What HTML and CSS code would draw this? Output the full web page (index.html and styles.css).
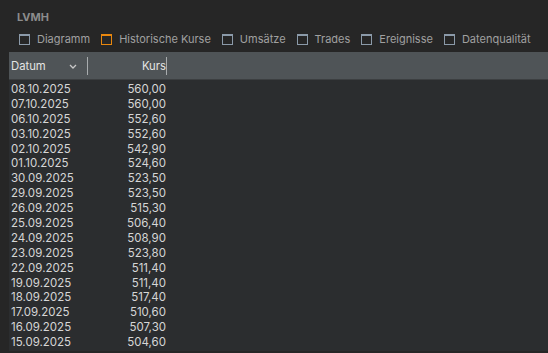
FILE: index.html
```html
<!DOCTYPE html>
<html lang="de">
<head>
    <meta charset="UTF-8">
    <title>LVMH</title>
    <link rel="stylesheet" href="styles.css">
</head>
<body>
    <h1 class="title">LVMH</h1>
    <div class="tabs">
        <span class="tab"><i class="box"></i>Diagramm</span>
        <span class="tab active"><i class="box"></i>Historische Kurse</span>
        <span class="tab"><i class="box"></i>Umsätze</span>
        <span class="tab"><i class="box"></i>Trades</span>
        <span class="tab"><i class="box"></i>Ereignisse</span>
        <span class="tab"><i class="box"></i>Datenqualität</span>
    </div>
    <div class="table">
        <div class="head">
            <div class="col-date">Datum
                <svg class="chev" width="8" height="5" viewBox="0 0 8 5"><path d="M1 1l3 3 3-3" fill="none" stroke="#c8c8c8" stroke-width="1.3"/></svg>
            </div>
            <div class="col-price">Kurs</div>
        </div>
        <div class="rows">
            <div class="row"><span class="col-date">08.10.2025</span><span class="col-price">560,00</span></div>
            <div class="row"><span class="col-date">07.10.2025</span><span class="col-price">560,00</span></div>
            <div class="row"><span class="col-date">06.10.2025</span><span class="col-price">552,60</span></div>
            <div class="row"><span class="col-date">03.10.2025</span><span class="col-price">552,60</span></div>
            <div class="row"><span class="col-date">02.10.2025</span><span class="col-price">542,90</span></div>
            <div class="row"><span class="col-date">01.10.2025</span><span class="col-price">524,60</span></div>
            <div class="row"><span class="col-date">30.09.2025</span><span class="col-price">523,50</span></div>
            <div class="row"><span class="col-date">29.09.2025</span><span class="col-price">523,50</span></div>
            <div class="row"><span class="col-date">26.09.2025</span><span class="col-price">515,30</span></div>
            <div class="row"><span class="col-date">25.09.2025</span><span class="col-price">506,40</span></div>
            <div class="row"><span class="col-date">24.09.2025</span><span class="col-price">508,90</span></div>
            <div class="row"><span class="col-date">23.09.2025</span><span class="col-price">523,80</span></div>
            <div class="row"><span class="col-date">22.09.2025</span><span class="col-price">511,40</span></div>
            <div class="row"><span class="col-date">19.09.2025</span><span class="col-price">511,40</span></div>
            <div class="row"><span class="col-date">18.09.2025</span><span class="col-price">517,40</span></div>
            <div class="row"><span class="col-date">17.09.2025</span><span class="col-price">510,60</span></div>
            <div class="row"><span class="col-date">16.09.2025</span><span class="col-price">507,30</span></div>
            <div class="row"><span class="col-date">15.09.2025</span><span class="col-price">504,60</span></div>
        </div>
    </div>
</body>
</html>
```

FILE: styles.css
```css
body {
    margin: 0;
    height: 353px;
    overflow: hidden;
    background-color: #262626;
    font-family: Inter, "Noto Sans", sans-serif;
    font-size: 11px;
    color: #d6d6d6;
}
.title {
    margin: 0;
    padding: 10px 0 0 17px;
    height: 16px;
    font-size: 11px;
    font-weight: 700;
    line-height: 14px;
    color: #8c8c8c;
}
.tabs {
    display: flex;
    align-items: center;
    gap: 11px;
    padding: 3px 0 3px 19px;
    height: 20px;
}
.tab {
    display: flex;
    align-items: center;
    gap: 7px;
    color: #a0a0a0;
    font-size: 11px;
}
.box {
    display: inline-block;
    width: 9px;
    height: 8px;
    border: 1px solid #8b9aa9;
    border-top-width: 2px;
}
.tab.active .box {
    border-color: #e8870e;
}
.table {
    margin: 0 0 0 9px;
    height: 299px;
    background-color: #2b2d2f;
}
.head {
    display: flex;
    height: 27px;
    align-items: center;
    background-color: #4f5457;
    border-bottom: 1px solid #3c3f41;
    color: #e4e4e4;
    font-size: 11.3px;
}
.head .col-date {
    display: flex;
    align-items: center;
    justify-content: space-between;
    height: 18px;
    padding-right: 10px;
    border-right: 1px solid #a8acae;
}
.chev {
    margin-top: 1px;
}
.head .col-price {
    width: 78px;
    height: 18px;
    line-height: 18px;
    border-right: 1px solid #a8acae;
}
.col-date {
    width: 66px;
    padding-left: 2px;
}
.col-price {
    width: 79px;
    text-align: right;
}
.rows {
    padding-top: 2px;
}
.row {
    display: flex;
    height: 14.9px;
    line-height: 14.9px;
    font-size: 11.5px;
}
.row .col-date {
    width: 76px;
}
```
